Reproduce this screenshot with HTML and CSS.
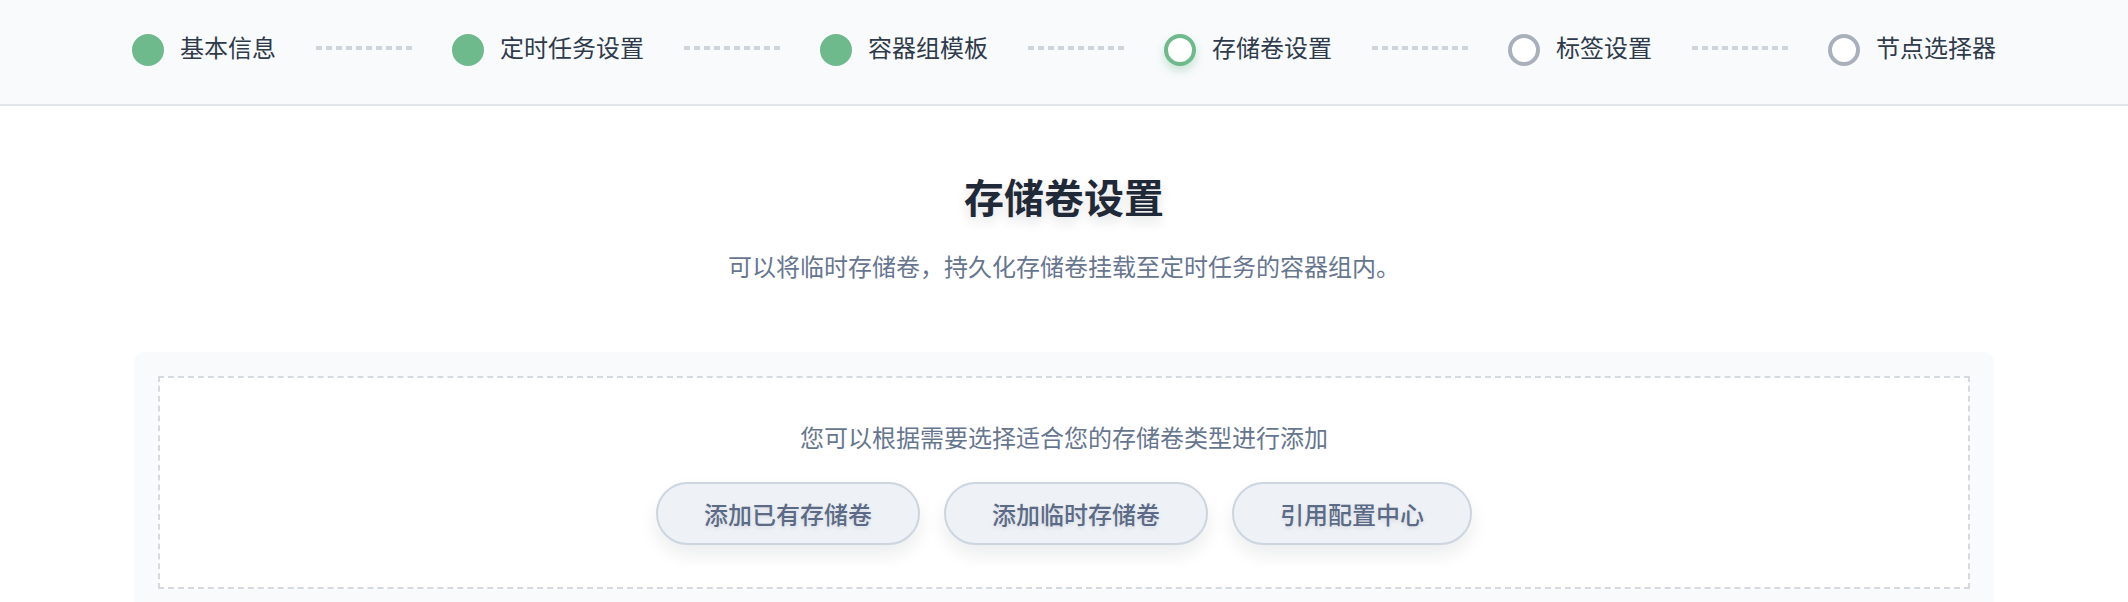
FILE: index.html
```html
<!DOCTYPE html>
<html lang="zh-CN">
<head>
<meta charset="utf-8">
<title>存储卷设置</title>
<link rel="stylesheet" href="styles.css">
</head>
<body>
<header class="steps">
  <div class="step done"><span class="dot"></span><span class="label">基本信息</span></div>
  <span class="connector"></span>
  <div class="step done"><span class="dot"></span><span class="label">定时任务设置</span></div>
  <span class="connector"></span>
  <div class="step done"><span class="dot"></span><span class="label">容器组模板</span></div>
  <span class="connector"></span>
  <div class="step active"><span class="dot"></span><span class="label">存储卷设置</span></div>
  <span class="connector"></span>
  <div class="step"><span class="dot"></span><span class="label">标签设置</span></div>
  <span class="connector"></span>
  <div class="step"><span class="dot"></span><span class="label">节点选择器</span></div>
</header>
<main class="content">
  <h1 class="title">存储卷设置</h1>
  <p class="subtitle">可以将临时存储卷，持久化存储卷挂载至定时任务的容器组内。</p>
  <section class="panel">
    <div class="dropzone">
      <p class="hint">您可以根据需要选择适合您的存储卷类型进行添加</p>
      <div class="actions">
        <button class="pill">添加已有存储卷</button>
        <button class="pill">添加临时存储卷</button>
        <button class="pill">引用配置中心</button>
      </div>
    </div>
  </section>
</main>
</body>
</html>
```
FILE: styles.css
```css
* { box-sizing: border-box; }
html, body { margin: 0; padding: 0; }
body {
  background: #ffffff;
  font-family: "Noto Sans CJK SC", "Noto Sans", "Liberation Sans", sans-serif;
  color: #334155;
  overflow: hidden;
}
.steps {
  height: 106px;
  padding-bottom: 5px;
  background: #f8fafc;
  border-bottom: 2px solid #e2e6ec;
  display: flex;
  align-items: center;
  justify-content: center;
}
.step {
  display: flex;
  align-items: center;
  gap: 16px;
}
.dot {
  width: 32px;
  height: 32px;
  border-radius: 50%;
  flex: none;
  border: 4px solid #a9b0bb;
  background: #ffffff;
}
.step.done .dot {
  background: #6fba8c;
  border-color: #6fba8c;
}
.step.active .dot {
  border-color: #6fba8c;
  box-shadow: 0 5px 9px rgba(111, 186, 140, 0.35);
}
.label {
  font-size: 24px;
  line-height: 32px;
  color: #2f3a4b;
  white-space: nowrap;
  margin-bottom: 6px;
}
.connector {
  width: 96px;
  height: 4px;
  margin: 0 40px 4px;
  flex: none;
  background: repeating-linear-gradient(to right, #cfd5dd 0 6px, transparent 6px 10px);
}
.content {
  padding-top: 66px;
  text-align: center;
}
.title {
  margin: 0;
  font-size: 40px;
  line-height: 48px;
  font-weight: 700;
  color: #1f2937;
  text-shadow: 0 6px 12px rgba(15, 23, 42, 0.12);
}
.subtitle {
  margin: 28px 0 0;
  font-size: 24px;
  line-height: 36px;
  color: #66768f;
}
.panel {
  width: 1860px;
  margin: 68px auto 0;
  padding: 24px;
  background: #f8fafc;
  border-radius: 10px;
}
.dropzone {
  background: #ffffff;
  border: 2px dashed #d5dae1;
  padding: 40px 0 42px;
}
.hint {
  margin: 0;
  font-size: 24px;
  line-height: 38px;
  color: #66768f;
}
.actions {
  margin-top: 26px;
  display: flex;
  justify-content: center;
  gap: 24px;
}
.pill {
  height: 63px;
  padding: 0 46px;
  border: 2px solid #cdd5df;
  border-radius: 999px;
  background: #eef2f7;
  font-family: inherit;
  font-size: 24px;
  font-weight: 500;
  color: #5b6b86;
  box-shadow: 0 10px 18px rgba(15, 23, 42, 0.08);
  text-shadow: 0 2px 4px rgba(15, 23, 42, 0.1);
  cursor: pointer;
}
```
